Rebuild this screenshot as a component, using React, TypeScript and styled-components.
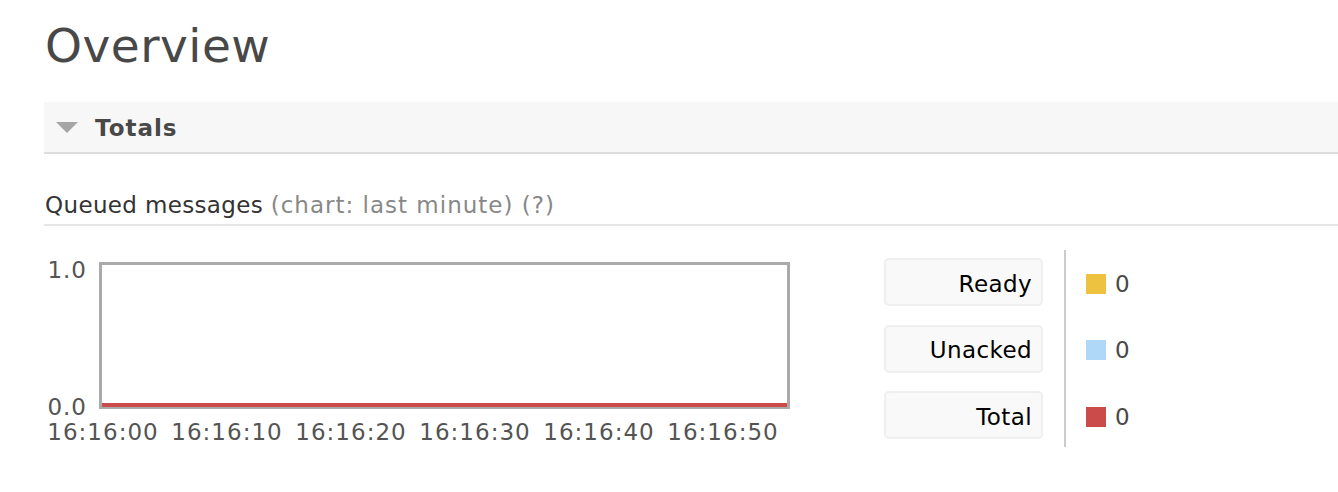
import React from "react";
import styled, { createGlobalStyle } from "styled-components";

const GlobalStyle = createGlobalStyle`
  html, body { margin: 0; padding: 0; background: #fff; }
  body { font-family: "DejaVu Sans", Verdana, sans-serif; color: #484848; }
`;

const Page = styled.div`
  padding: 0 0 0 44px;
`;

const Title = styled.h1`
  margin: 18px 0 0 1px;
  font-size: 47px;
  font-weight: normal;
  line-height: 55px;
  letter-spacing: 0.5px;
  color: #484848;
`;

const SectionBar = styled.div`
  margin-top: 29px;
  height: 50px;
  background: #f7f7f7;
  border-bottom: 2px solid #dddddd;
  display: flex;
  align-items: center;
  padding-left: 12px;
  gap: 17px;
`;

const SectionTitle = styled.h2`
  margin: 0;
  font-size: 23px;
  font-weight: bold;
  color: #484848;
  line-height: 27px;
  letter-spacing: 1px;
  padding-top: 3px;
`;

const SubHeading = styled.h3`
  margin: 38px 0 0 0;
  padding: 0 0 5px 1px;
  font-size: 23px;
  font-weight: normal;
  line-height: 27px;
  letter-spacing: 0.35px;
  color: #333;
  border-bottom: 2px solid #e6e6e6;
`;

const Muted = styled.span`
  color: #888;
  letter-spacing: 1px;
`;

const ChartRow = styled.div`
  margin-top: 24px;
  display: flex;
  align-items: flex-start;
`;

const Chart = styled.div`
  display: grid;
  grid-template-columns: 55px 691px;
  grid-template-rows: 147px 40px;
  margin-top: 12px;
`;

const YAxis = styled.div`
  position: relative;
`;

const AxisLabel = styled.span`
  position: absolute;
  font-size: 23px;
  line-height: 27px;
  letter-spacing: 1px;
  color: #545454;
  white-space: nowrap;
`;

const YLabel = styled(AxisLabel)`
  right: 12px;
`;

const Plot = styled.div`
  border: 3px solid #aaaaaa;
  background: #fff;
  display: flex;
  align-items: flex-end;
`;

const SeriesLine = styled.div<{ $color: string }>`
  height: 4px;
  width: 100%;
  margin-bottom: -1px;
  background: ${(p) => p.$color};
`;

const XAxis = styled.div`
  position: relative;
  grid-column: 1 / span 2;
`;

const XLabel = styled(AxisLabel)`
  width: 124px;
  text-align: center;
  top: 10px;
`;

const Legend = styled.div`
  margin-left: 94px;
  display: flex;
  align-items: stretch;
`;

const LegendCol = styled.div`
  display: flex;
  flex-direction: column;
  gap: 18.5px;
  padding: 8px 0;
`;

const LegendButton = styled.div`
  box-sizing: border-box;
  width: 159px;
  height: 48px;
  background: #f9f9f9;
  border: 2px solid #efefef;
  border-radius: 5px;
  display: flex;
  align-items: center;
  justify-content: flex-end;
  padding: 3px 9px 0 0;
  font-size: 23px;
  letter-spacing: 0.4px;
  color: #000;
`;

const Divider = styled.div`
  width: 2px;
  background: #cccccc;
  margin: 0 20px 0 21px;
`;

const ValueRow = styled.div`
  height: 48px;
  display: flex;
  align-items: center;
  gap: 9px;
  padding-top: 3px;
  box-sizing: border-box;
  font-size: 23px;
  color: #484848;
`;

const Swatch = styled.span<{ $color: string }>`
  width: 20px;
  height: 20px;
  background: ${(p) => p.$color};
  display: inline-block;
`;

const series = [
  { label: "Ready", color: "#edc240", value: 0 },
  { label: "Unacked", color: "#afd8f8", value: 0 },
  { label: "Total", color: "#cb4b4b", value: 0 },
];

const ticks = ["16:16:00", "16:16:10", "16:16:20", "16:16:30", "16:16:40", "16:16:50"];

export default function App() {
  return (
    <Page>
      <GlobalStyle />
      <Title>Overview</Title>
      <SectionBar>
        <svg width="22" height="11" viewBox="0 0 22 11">
          <polygon points="0,0 22,0 11,11" fill="#a6a6a6" />
        </svg>
        <SectionTitle>Totals</SectionTitle>
      </SectionBar>
      <SubHeading>
        Queued messages <Muted>(chart: last minute) (?)</Muted>
      </SubHeading>
      <ChartRow>
        <Chart>
          <YAxis>
            <YLabel style={{ top: "-5px" }}>1.0</YLabel>
            <YLabel style={{ top: "132px" }}>0.0</YLabel>
          </YAxis>
          <Plot>
            <SeriesLine $color="#cb4b4b" />
          </Plot>
          <XAxis>
            {ticks.map((t, i) => (
              <XLabel key={t} style={{ left: `${-3 + i * 124}px` }}>
                {t}
              </XLabel>
            ))}
          </XAxis>
        </Chart>
        <Legend>
          <LegendCol>
            {series.map((s) => (
              <LegendButton key={s.label}>{s.label}</LegendButton>
            ))}
          </LegendCol>
          <Divider />
          <LegendCol>
            {series.map((s) => (
              <ValueRow key={s.label}>
                <Swatch $color={s.color} />
                {s.value}
              </ValueRow>
            ))}
          </LegendCol>
        </Legend>
      </ChartRow>
    </Page>
  );
}
